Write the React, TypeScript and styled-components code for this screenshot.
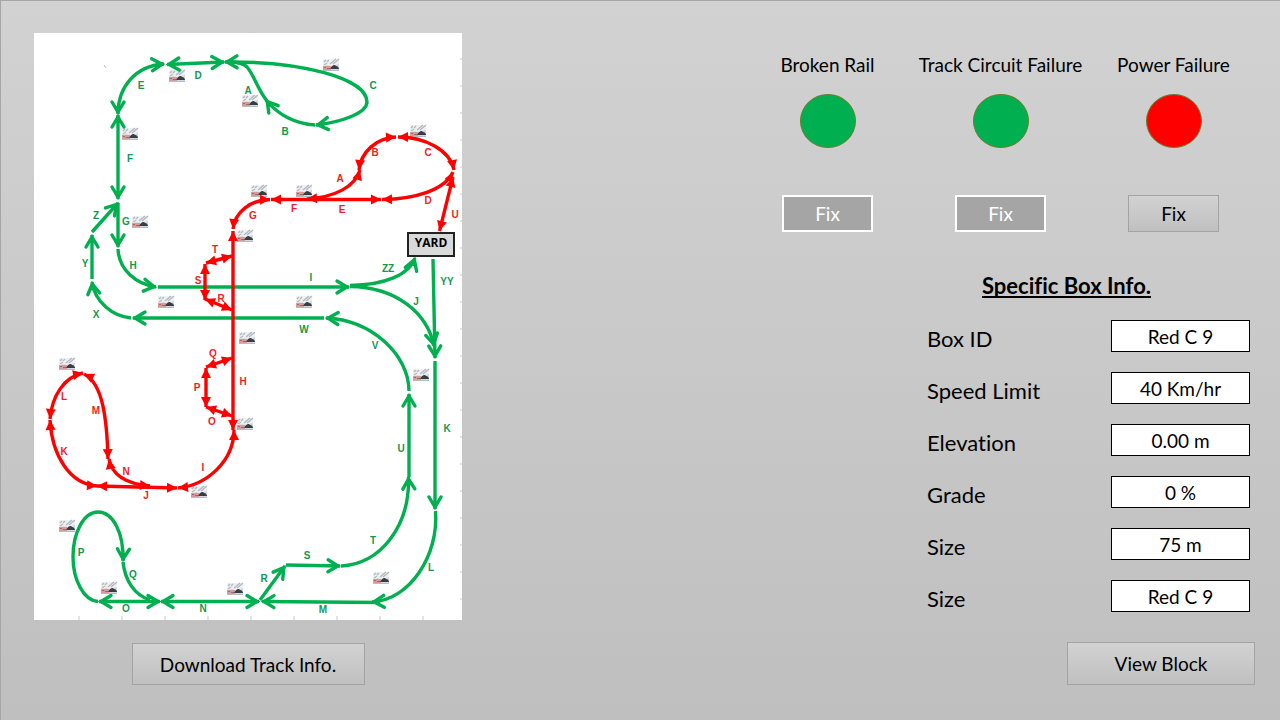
import React from "react";
import styled, { createGlobalStyle } from "styled-components";

const GREEN = "#00b050";
const RED = "#ff0000";

const GlobalStyle = createGlobalStyle`
  * { box-sizing: border-box; }
  body {
    margin: 0;
    font-family: Lato, "Liberation Sans", sans-serif;
    font-variant-ligatures: none;
    color: #000;
  }
`;

const Page = styled.main`
  display: flex;
  flex-wrap: wrap;
  justify-content: space-between;
  align-items: flex-start;
  min-height: 100vh;
  padding: 32px 20px 32px 33px;
  border-top: 1px solid #a6a6a6;
  border-left: 1px solid #a6a6a6;
  background: linear-gradient(#d2d2d2, #bfbfbf);
`;

const MapColumn = styled.section`
  display: flex;
  flex-direction: column;
  align-items: center;
  flex: 0 1 428px;
  gap: 23px;
`;

const TrackMap = styled.svg`
  display: block;
  width: 100%;
  height: auto;
  background: #fff;
`;

const ControlColumn = styled.section`
  display: flex;
  flex-direction: column;
  flex: 0 1 519px;
`;

const StatusGrid = styled.div`
  display: grid;
  grid-template-columns: repeat(3, 1fr);
  padding-top: 20px;
`;

const StatusItem = styled.div`
  display: flex;
  flex-direction: column;
  align-items: center;
`;

const StatusLabel = styled.span`
  font-size: 19px;
  line-height: 24px;
  white-space: nowrap;
`;

const Lamp = styled.span<{ $color: string }>`
  width: 56px;
  height: 54px;
  margin: 17px 0 47px;
  border: 1px solid #6a7f2c;
  border-radius: 50%;
  background: ${(p) => p.$color};
`;

const Button = styled.button`
  padding: 0;
  border: 1px solid #a3a3a3;
  background: linear-gradient(#d2d2d2, #c0c0c0);
  color: #000;
  font: 19px Lato, "Liberation Sans", sans-serif;
  cursor: pointer;
`;

const FixButton = styled(Button)`
  width: 91px;
  height: 37px;

  &:disabled {
    border: 2px solid #fff;
    background: #a5a5a5;
    color: #fff;
    cursor: default;
  }
`;

const DownloadButton = styled(Button)`
  width: 233px;
  height: 42px;
`;

const ViewButton = styled(Button)`
  width: 188px;
  height: 43px;
  margin: 30px 5px 0 0;
  align-self: flex-end;
`;

const InfoPanel = styled.div`
  display: flex;
  flex-direction: column;
  align-self: flex-end;
  width: 323px;
  max-width: 100%;
  margin: 41px 10px 0 0;
`;

const InfoTitle = styled.h2`
  margin: 0 0 21px;
  padding-right: 44px;
  font-size: 22px;
  line-height: 26px;
  font-weight: 700;
  text-align: center;
  text-decoration: underline;
  text-decoration-thickness: 2px;
  text-underline-offset: 2px;
  text-decoration-skip-ink: none;
`;

const InfoRows = styled.div`
  display: flex;
  flex-direction: column;
  gap: 20px;
`;

const InfoRow = styled.div`
  display: flex;
  align-items: center;
  justify-content: space-between;
  height: 32px;
`;

const InfoLabel = styled.label`
  padding-top: 6px;
  font-size: 22px;
  line-height: 28px;
`;

const InfoValue = styled.input`
  width: 139px;
  height: 32px;
  padding: 0;
  border: 1px solid #000;
  border-radius: 0;
  background: #fff;
  color: #000;
  font: 19px Lato, "Liberation Sans", sans-serif;
  text-align: center;
`;

const MapLetter = styled.text`
  font: bold 10px "Liberation Sans", sans-serif;
  text-anchor: middle;
`;

const YardLabel = styled.text`
  font: bold 13px "Open Sans", sans-serif;
  font-size: 12px;
  text-anchor: middle;
`;

type Segment = [path: string, heads: "both" | "end" | "none"];
type Letter = [name: string, x: number, y: number];

const greenSegments: Segment[] = [
  ["M118 114C118 87 135 66 164 64", "both"],
  ["M167 64.500L224 62", "both"],
  ["M316 125C342 122 367 113 367 102C367 78 300 61 225 62", "both"],
  ["M267 101C257 88 254 75 247 67C243 63 236 62 229 62", "none"],
  ["M315 125C296 124 278 115 266 100", "end"],
  ["M118 115V199", "both"],
  ["M92 232L118 203", "end"],
  ["M118 203V247", "end"],
  ["M118 249C119 270 136 284 156 287", "end"],
  ["M158 287H349", "end"],
  ["M350 285.500C385 285 409 275 415 258", "end"],
  ["M350 286.500C395 287 427 312 434 346", "end"],
  ["M433 259L435 358", "end"],
  ["M435 361V509", "end"],
  ["M435.500 511C439 555 410 600 372 602", "end"],
  ["M380 602.500L262 601.500", "end"],
  ["M161 601.500H259", "both"],
  ["M99 601.500H160", "both"],
  ["M123 562C125 580 134 595 150 600", "none"],
  ["M98 601.500C84 601 73 580 73 557C73 532 84 512 98 512C113 512 124 533 123 561", "end"],
  ["M260 600L285 566", "end"],
  ["M286 565L340 566", "end"],
  ["M341 566C380 564 410 527 408.500 477", "end"],
  ["M409 477V394", "end"],
  ["M409 391C409 355 372 320 326 318", "end"],
  ["M324 318H133", "end"],
  ["M131 318C112 316 95 302 92 282", "end"],
  ["M92 279V235", "end"],
];

const redSegments: Segment[] = [
  ["M233 229C235 212 250 200 270 199.500", "both"],
  ["M271 199.500H381", "both"],
  ["M307 199C335 197 355 187 360 170", "both"],
  ["M359 170C361 152 376 138 396 137", "both"],
  ["M398 137C425 137 450 150 454 170", "both"],
  ["M382 199.500C415 199 445 190 453 172", "both"],
  ["M453 177L439.500 231", "both"],
  ["M233 231V430", "both"],
  ["M206 263L232 256", "both"],
  ["M205 264V300", "both"],
  ["M205 299L232 310", "both"],
  ["M206 367L232 358", "both"],
  ["M206 368V407", "both"],
  ["M206 407L232 416", "both"],
  ["M234 430C234 460 208 485 178 488", "both"],
  ["M97 486L177 488", "both"],
  ["M109 459C112 476 128 484 150 486", "both"],
  ["M84 374C103 383 107 420 108 459", "both"],
  ["M83 373C64 377 52 396 50 419", "both"],
  ["M50 420C52 456 70 484 97 486", "both"],
];

const greenLetters: Letter[] = [
  ["E", 141, 86], ["D", 198, 76], ["A", 248, 91], ["C", 373, 86], ["B", 285, 132],
  ["F", 130, 159], ["Z", 96, 216], ["G", 126, 222], ["Y", 85, 264], ["H", 133, 266],
  ["X", 96, 315], ["I", 311, 278], ["W", 304, 330], ["ZZ", 388, 269], ["YY", 447, 282],
  ["J", 416, 302], ["V", 375, 346], ["K", 447, 429], ["U", 401, 449], ["T", 373, 541],
  ["L", 431, 568], ["S", 307, 556], ["R", 264, 579], ["M", 323, 610], ["N", 203, 609],
  ["O", 126, 609], ["Q", 133, 575], ["P", 81, 553],
];

const redLetters: Letter[] = [
  ["B", 375, 153], ["C", 428, 153], ["A", 340, 179], ["D", 428, 201], ["E", 342, 210],
  ["F", 294, 209], ["G", 253, 216], ["U", 455, 215], ["T", 215, 250], ["S", 198, 281],
  ["R", 221, 299], ["Q", 213, 354], ["P", 197, 388], ["H", 243, 382], ["O", 212, 422],
  ["I", 203, 468], ["J", 146, 496], ["N", 126, 472], ["M", 96, 411], ["L", 64, 397],
  ["K", 64, 452],
];

const crossings: [number, number][] = [
  [331, 65], [177, 76], [250, 101], [130, 134], [140, 222], [418, 131], [259, 191],
  [304, 191], [245, 236], [166, 302], [304, 302], [247, 338], [245, 424], [421, 375],
  [199, 492], [67, 364], [67, 526], [109, 588], [235, 589], [381, 578],
];

const bottomTicks = Array.from({ length: 9 }, (_, i) => 79 + i * 43);
const sideTicks = Array.from({ length: 21 }, (_, i) => 59 + i * 27);

const statuses = [
  { name: "Broken Rail", failed: false },
  { name: "Track Circuit Failure", failed: false },
  { name: "Power Failure", failed: true },
];

const boxInfo = [
  { id: "box-id", label: "Box ID", value: "Red C 9" },
  { id: "speed-limit", label: "Speed Limit", value: "40 Km/hr" },
  { id: "elevation", label: "Elevation", value: "0.00 m" },
  { id: "grade", label: "Grade", value: "0 %" },
  { id: "size", label: "Size", value: "75 m" },
  { id: "size-box", label: "Size", value: "Red C 9" },
];

function Line({ segments, color, head }: { segments: Segment[]; color: string; head: string }) {
  return (
    <g fill="none" stroke={color} strokeWidth="3.4">
      {segments.map(([d, heads]) => (
        <path
          key={d}
          d={d}
          markerStart={heads === "both" ? `url(#${head})` : undefined}
          markerEnd={heads !== "none" ? `url(#${head})` : undefined}
        />
      ))}
    </g>
  );
}

function Letters({ items, color }: { items: Letter[]; color: string }) {
  return (
    <g fill={color}>
      {items.map(([name, x, y]) => (
        <MapLetter key={name} x={x} y={y + 3}>{name}</MapLetter>
      ))}
    </g>
  );
}

function Map() {
  return (
    <TrackMap viewBox="34 33 428 587" role="img" aria-label="Track map">
      <defs>
        <marker id="open" markerUnits="userSpaceOnUse" markerWidth="20" markerHeight="20"
          viewBox="-16 -10 20 20" refX="0" refY="0" orient="auto-start-reverse">
          <path d="M-12 -6L-2 0L-12 6" fill="none" stroke={GREEN} strokeWidth="3.400" strokeLinecap="round" />
          <path d="M-8 -3L-1 0L-8 3Z" fill={GREEN} />
        </marker>
        <marker id="solid" markerUnits="userSpaceOnUse" markerWidth="14" markerHeight="14"
          viewBox="-11 -7 14 14" refX="0" refY="0" orient="auto-start-reverse">
          <path d="M-10 -5L0 0L-10 5Z" fill={RED} />
        </marker>
        <g id="crossing">
          <path d="M-8 -6H8V5H-8Z" fill="#eef0f2" />
          <path d="M-7 -3L-5 -5M-4 -3L-2 -5M-1 -1L5 -6M2 -1L8 -6M-7 0L-4 -2" stroke="#b4bac2" strokeWidth="1.400" fill="none" />
          <path d="M-8 1L-3 0L0 1L8 -1V5H-8Z" fill="#d3d9e0" />
          <path d="M-8 1H0V5H-8Z" fill="#d69c98" />
          <path d="M-7 2.500H-5M-4 3.500H-1" stroke="#a0686a" />
          <path d="M-1 4C1 0 4 -1 5 1C7 1 8 3 8 4Z" fill="#3a3c44" />
          <path d="M-8 5.500H8" stroke="#b3bdca" />
        </g>
      </defs>
      <g stroke="#c9c9c9">
        {bottomTicks.map((x) => <path key={x} d={`M${x} 616V620`} />)}
        {sideTicks.map((y) => <path key={y} d={`M460 ${y}H462`} />)}
      </g>
      <path d="M104 65L106 68" stroke="#b5b5b5" />
      {crossings.map(([x, y]) => <use key={`${x}-${y}`} href="#crossing" x={x} y={y} />)}
      <Line segments={greenSegments} color={GREEN} head="open" />
      <Line segments={redSegments} color={RED} head="solid" />
      <Letters items={greenLetters} color="#14984f" />
      <Letters items={redLetters} color="#f01d25" />
      <rect x="408" y="233" width="46" height="23" fill="#d9d9d9" stroke="#222" strokeWidth="2" />
      <YardLabel x="431" y="247">YARD</YardLabel>
    </TrackMap>
  );
}

export default function App() {
  return (
    <>
      <GlobalStyle />
      <Page>
        <MapColumn>
          <Map />
          <DownloadButton type="button">Download Track Info.</DownloadButton>
        </MapColumn>
        <ControlColumn>
          <StatusGrid>
            {statuses.map(({ name, failed }) => (
              <StatusItem key={name}>
                <StatusLabel>{name}</StatusLabel>
                <Lamp $color={failed ? RED : GREEN} />
                <FixButton type="button" disabled={!failed}>Fix</FixButton>
              </StatusItem>
            ))}
          </StatusGrid>
          <InfoPanel>
            <InfoTitle>Specific Box Info.</InfoTitle>
            <InfoRows>
              {boxInfo.map(({ id, label, value }) => (
                <InfoRow key={id}>
                  <InfoLabel htmlFor={id}>{label}</InfoLabel>
                  <InfoValue id={id} defaultValue={value} readOnly />
                </InfoRow>
              ))}
            </InfoRows>
          </InfoPanel>
          <ViewButton type="button">View Block</ViewButton>
        </ControlColumn>
      </Page>
    </>
  );
}
